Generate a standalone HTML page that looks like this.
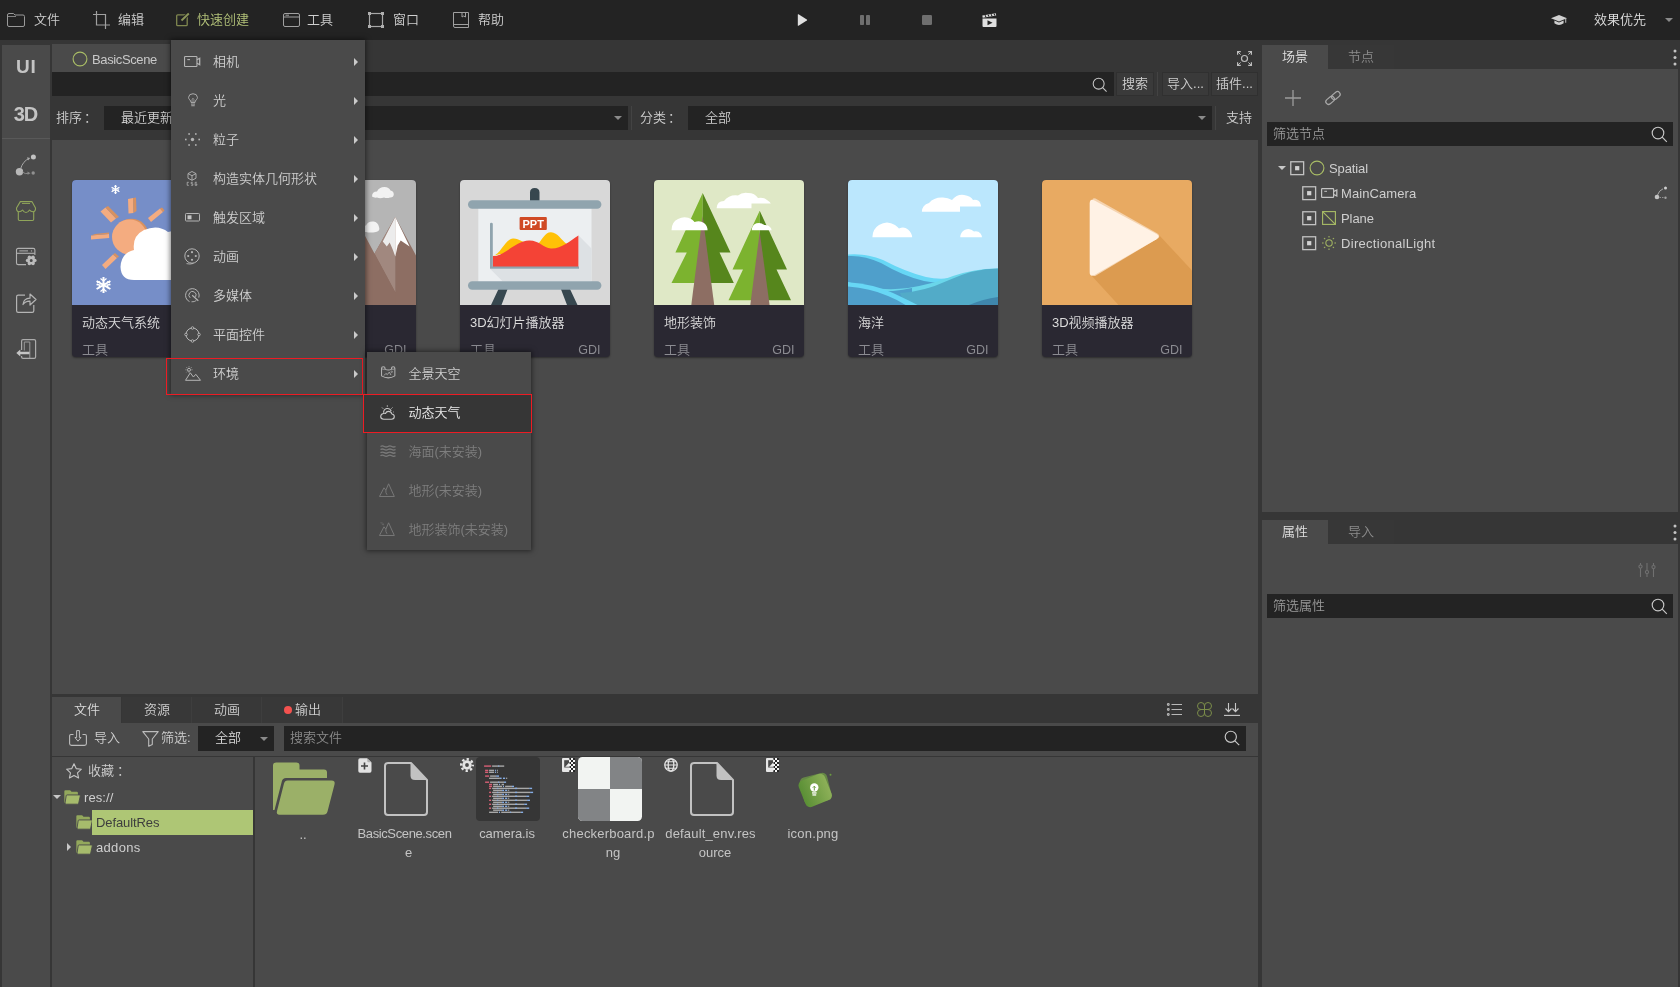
<!DOCTYPE html>
<html lang="zh-CN">
<head>
<meta charset="utf-8">
<title>BasicScene</title>
<style>
*{box-sizing:border-box;margin:0;padding:0}
html,body{width:1680px;height:987px;overflow:hidden;background:#363636}
body{position:relative;will-change:transform;font-family:"Liberation Sans","Noto Sans CJK SC",sans-serif;font-size:13px;color:#cfcfcf;line-height:1;font-weight:350}
.a{position:absolute}
.t{position:absolute;white-space:nowrap;line-height:20px;height:20px}
svg{position:absolute;overflow:visible}
.p{background:#4a4a4a}
.d{background:#232323}
.dim{color:#8d8d8d}
.g{color:#b3c279}
.fl{text-align:center;color:#c4c4c4}
/* menu */
.menu{position:absolute;background:#4a4a4a;box-shadow:0 0 5px 1px rgba(0,0,0,.5)}
.mi{position:absolute;left:0;right:0;height:39px}
.mi .t{left:42px;top:10px}
.mi .ar{position:absolute;right:7.300px;top:16px;width:0;height:0;border-left:4.500px solid #cacaca;border-top:4px solid transparent;border-bottom:4px solid transparent}
.btn{background:#3a3a3a;box-shadow:inset 0 0 0 1px #303030}
/* cards */
.card{position:absolute;top:180px;width:150px;height:177px;border-radius:4px;overflow:hidden;background:#2a2832;box-shadow:0 1px 2px rgba(0,0,0,.4)}
.card .im{position:absolute;left:0;top:0;width:150px;height:125px;overflow:hidden}
.card .nm{position:absolute;left:10px;top:133px;color:#dcdcdc;line-height:20px;white-space:nowrap}
.card .ty{position:absolute;left:10px;top:160px;color:#8c8c92;line-height:20px}
.card .gd{position:absolute;right:9.500px;top:160px;color:#8c8c92;line-height:20px;font-size:12.500px}
</style>
</head>
<body>
<!-- TOPBAR -->
<div class="a d" id="topbar" style="left:0;top:0;width:1680px;height:40px">
 <svg style="left:7px;top:13px" width="18" height="14" viewBox="0 0 18 14" fill="none" stroke="#9a9a9a" stroke-width="1"><path d="M.5 2 Q.5 .5 2 .5 H6.5 L8 2 H16 Q17.5 2 17.5 3.5 V12 Q17.5 13.5 16 13.5 H2 Q.5 13.5 .5 12 Z"/><path d="M.5 3.5H9" stroke-width=".8"/></svg>
 <span class="t" style="left:34px;top:10px">文件</span>
 <svg style="left:93px;top:11px" width="17" height="18" viewBox="0 0 17 18" fill="none" stroke="#a0a0a0" stroke-width="1.2"><path d="M0 3.5H12.5V18"/><path d="M3.5 0V14H17"/></svg>
 <span class="t" style="left:118px;top:10px">编辑</span>
 <svg style="left:176px;top:12px" width="16" height="16" viewBox="0 0 16 16" fill="none" stroke="#808850" stroke-width="1.300"><rect x=".7" y="2.800" width="10.500" height="10.900" rx="1"/><path d="M5.500 8.500L12.800 1.500" stroke-width="3.600" stroke="#232323"/><path d="M5.500 8.500L12.800 1.500" stroke-width="1.900" stroke="#8c965a"/></svg>
 <span class="t g" style="left:197px;top:10px">快速创建</span>
 <svg style="left:283px;top:13px" width="17" height="14" viewBox="0 0 17 14" fill="none" stroke="#a0a0a0" stroke-width="1"><rect x=".5" y=".5" width="16" height="13" rx="1.5"/><path d="M.5 4H16.5M2.5 2.2H6"/></svg>
 <span class="t" style="left:307px;top:10px">工具</span>
 <svg style="left:368px;top:12px" width="16" height="16" viewBox="0 0 16 16" fill="none" stroke="#a8a8a8" stroke-width="1.2"><rect x="1.5" y="1.5" width="13" height="13"/><g fill="#b0b0b0" stroke="none"><rect x="0" y="0" width="3" height="3"/><rect x="13" y="0" width="3" height="3"/><rect x="0" y="13" width="3" height="3"/><rect x="13" y="13" width="3" height="3"/></g></svg>
 <span class="t" style="left:393px;top:10px">窗口</span>
 <svg style="left:453px;top:12px" width="16" height="16" viewBox="0 0 16 16" fill="none" stroke="#a0a0a0" stroke-width="1"><path d="M.5 .5H15.5V15.5H2Q.5 15.5 .5 14Z"/><path d="M.5 12.5H15.5"/><path d="M9 .5V5L10.7 4 12.5 5V.5"/></svg>
 <span class="t" style="left:478px;top:10px">帮助</span>
 <svg style="left:797px;top:14px" width="11" height="12" viewBox="0 0 11 12"><path d="M.8 .6Q.8 0 1.5 .3L9.8 5.4Q10.6 6 9.8 6.6L1.5 11.7Q.8 12 .8 11.4Z" fill="#e0e0e0"/></svg>
 <svg style="left:860px;top:15px" width="10" height="10" viewBox="0 0 10 10" fill="#6e6e6e"><rect x="0" y="0" width="4" height="10" rx=".8"/><rect x="6" y="0" width="4" height="10" rx=".8"/></svg>
 <svg style="left:922px;top:15px" width="10" height="10" viewBox="0 0 10 10" fill="#6e6e6e"><rect x="0" y="0" width="10" height="10" rx="1.2"/></svg>
 <svg style="left:982px;top:13px" width="15" height="14" viewBox="0 0 15 14"><path d="M.5 5.5H14.5V13Q14.5 14 13.5 14H1.5Q.5 14 .5 13Z" fill="#e0e0e0"/><path d="M.3 2.6L13.8 .3L14.2 2.4L.7 4.8Z" fill="#e0e0e0"/><path d="M3 2.2L4 4M6 1.7L7 3.5M9 1.2L10 3M12 .7L13 2.5" stroke="#232323" stroke-width="1.1"/><path d="M5.5 7.3L10.5 9.8L5.5 12.3Z" fill="#232323"/></svg>
 <svg style="left:1551px;top:15px" width="16" height="11" viewBox="0 0 16 11" fill="#d0d0d0"><path d="M8 0L16 3.2L8 6.4L0 3.2Z"/><path d="M3.4 5.6V8.2Q8 11.6 12.600 8.200V5.600L8 7.500Z"/><path d="M14.300 3.800H15.200V7.800H14.300Z"/></svg>
 <span class="t" style="left:1594px;top:10px;color:#e0e0e0">效果优先</span>
 <div class="a" style="left:1665px;top:18px;border-top:4px solid #8a8a8a;border-left:4.500px solid transparent;border-right:4.500px solid transparent"></div>
</div>

<!-- LEFT SIDEBAR -->
<div class="a p" id="sidebar" style="left:2px;top:45px;width:48px;height:942px">
 <span class="t" style="left:0;width:48px;text-align:center;top:10px;font-weight:bold;font-size:19px;letter-spacing:.8px;text-indent:.8px;line-height:24px;height:24px;color:#c4c4c4">UI</span>
 <span class="t" style="left:0;width:48px;text-align:center;top:56.500px;font-weight:bold;font-size:20px;letter-spacing:-1px;text-indent:-1px;line-height:24px;height:24px;color:#c4c4c4">3D</span>
 <div class="a" style="left:0;top:93px;width:48px;height:1px;background:#595959"></div>
 <svg style="left:12px;top:108px" width="24" height="26" viewBox="0 0 24 26"><circle cx="5.5" cy="18.700" r="3.700" fill="#b8b8b8"/><circle cx="19.400" cy="4" r="2.500" fill="#c2c2c2"/><circle cx="19.200" cy="20" r="1.700" fill="#909090"/><path d="M6.500 16Q9 8 15 5.500" fill="none" stroke="#a8a8a8" stroke-width="1"/><path d="M13 4.200L16.300 5L14 7.500Z" fill="#a8a8a8"/><path d="M8.500 19Q11 21.500 14.500 20.300" fill="none" stroke="#8a8a8a" stroke-width="1"/><path d="M13.500 18.600L16.500 20.200L13.600 21.800Z" fill="#8a8a8a"/></svg>
 <svg style="left:14px;top:156px" width="20" height="20" viewBox="0 0 20 20" fill="none" stroke="#90a55a" stroke-width="1.100" stroke-linejoin="round"><path d="M4.300 .6H15.900L19.500 7Q19.800 10.400 17 10.800Q14.800 10.600 13.500 9Q12 11.500 10 11.500Q8 11.500 6.600 9Q5.200 10.600 3 10.800Q.3 10.400 .5 7Z"/><path d="M2.300 10.800V18.300Q2.300 19.500 3.500 19.500H16.500Q17.700 19.500 17.700 18.300V10.800"/><path d="M6 2.500H14" stroke-width=".9"/></svg>
 <svg style="left:14px;top:203px" width="22" height="18" viewBox="0 0 22 18" fill="none" stroke="#b0b0b0" stroke-width="1.100"><path d="M10 16.600H2.200Q.5 16.600 .5 14.900V2Q.5 .4 2.200 .4H17.200Q18.900 .4 18.900 2V7"/><path d="M.5 5.300H18.900"/><path d="M3.300 2.900H12" stroke-width="1"/><circle cx="15.500" cy="2.900" r=".7" fill="#b0b0b0" stroke="none"/><g fill="#bcbcbc" stroke="none"><circle cx="18.90" cy="12.40" r="1.700"/><circle cx="17.05" cy="15.60" r="1.700"/><circle cx="13.35" cy="15.60" r="1.700"/><circle cx="11.50" cy="12.40" r="1.700"/><circle cx="13.35" cy="9.20" r="1.700"/><circle cx="17.05" cy="9.20" r="1.700"/></g><circle cx="15.200" cy="12.400" r="2.700" stroke="#bcbcbc" stroke-width="2.400"/></svg>
 <svg style="left:14px;top:248px" width="21" height="20" viewBox="0 0 21 20" fill="none" stroke="#b4b4b4" stroke-width="1.200" stroke-linejoin="round"><path d="M9 2.200H2.200Q.6 2.200 .6 3.800V17.800Q.6 19.400 2.200 19.400H16.200Q17.800 19.400 17.800 17.800V12"/><path d="M7 11.500Q7.500 5.500 14 5.200V1L20 6.500L14 12V8.200Q9.500 8 7 11.500Z"/></svg>
 <svg style="left:14px;top:294px" width="21" height="20" viewBox="0 0 21 20" fill="none" stroke="#ababab" stroke-width="1.200" stroke-linejoin="round"><path d="M5.600 11V2Q5.600 .6 7 .6H18.200Q19.600 .6 19.600 2V18Q19.600 19.400 18.200 19.400H7Q5.600 19.400 5.600 18V17"/><path d="M8.300 11.500V3H13.800V19" stroke-width="1" stroke="#9a9a9a"/><path d="M.3 14L4.300 10.600V12.700H13.500V15.300H4.300V17.400Z" fill="#c4c4c4" stroke="none"/></svg>
</div>

<!-- MAIN -->
<div class="a p" id="tab1" style="left:52px;top:44px;width:118px;height:29px">
 <svg style="left:20px;top:7px" width="16" height="16" viewBox="0 0 16 16"><circle cx="8" cy="8" r="6.900" fill="none" stroke="#a9bd66" stroke-width="1.100"/></svg>
 <span class="t" id="tTab" style="left:40px;top:6px;font-size:13px;color:#c8c8c8;letter-spacing:-0.38px">BasicScene</span>
</div>
<svg style="left:1236.500px;top:50.700px" width="15" height="15" viewBox="0 0 15 15" fill="none" stroke="#bdbdbd" stroke-width="1.200"><circle cx="7.500" cy="7.500" r="3"/><path d="M.6 3.800V.6H3.800M11.200 .6H14.400V3.800M14.400 11.200V14.400H11.200M3.800 14.400H.6V11.200"/><path d="M.6 .6L3.600 3.600M14.400 .6L11.400 3.600M14.400 14.400L11.400 11.400M.6 14.400L3.600 11.400" stroke-width="1"/></svg>
<div class="a d" id="search" style="left:52px;top:72px;width:1062px;height:24px">
 <svg style="left:1040px;top:4.500px" width="15.500" height="15.500" viewBox="0 0 17 17" fill="none" stroke="#c8c8c8" stroke-width="1.150"><circle cx="7.300" cy="7.300" r="6"/><path d="M11.700 11.700L16 16"/></svg>
</div>
<div class="a btn" style="left:1116px;top:72px;width:38px;height:24px"><span class="t" style="left:0;width:100%;text-align:center;top:2px">搜索</span></div>
<div class="a" style="left:1157px;top:72px;width:1px;height:24px;background:#434343"></div>
<div class="a btn" style="left:1162px;top:72px;width:47px;height:24px"><span class="t" style="left:0;width:100%;text-align:center;top:2px">导入...</span></div>
<div class="a btn" style="left:1211px;top:72px;width:47px;height:24px"><span class="t" style="left:0;width:100%;text-align:center;top:2px">插件...</span></div>
<span class="t" style="left:56px;top:108px">排序<span style="padding-left:2px">：</span></span>
<div class="a d" id="sort" style="left:104px;top:106px;width:524px;height:24px">
 <span class="t" style="left:17px;top:2px">最近更新</span>
 <div class="a" style="left:510px;top:10px;border-top:4px solid #8a8a8a;border-left:4.500px solid transparent;border-right:4.500px solid transparent"></div>
</div>
<div class="a" style="left:631px;top:106px;width:1px;height:24px;background:#434343"></div>
<span class="t" style="left:640px;top:108px">分类<span style="padding-left:2px">：</span></span>
<div class="a d" id="cat" style="left:688px;top:106px;width:524px;height:24px">
 <span class="t" style="left:17px;top:2px">全部</span>
 <div class="a" style="left:510px;top:10px;border-top:4px solid #8a8a8a;border-left:4.500px solid transparent;border-right:4.500px solid transparent"></div>
</div>
<div class="a" style="left:1215px;top:106px;width:1px;height:24px;background:#434343"></div>
<span class="t" style="left:1226px;top:108px">支持</span>
<div class="a p" id="store" style="left:52px;top:140px;width:1206px;height:554px"></div>
<!--CARDS-->
<div class="card" style="left:72px">
 <svg class="im" width="150" height="125" viewBox="0 0 150 125"><rect width="150" height="125" fill="#768ec8"/>
  <g fill="#f4ac80"><path d="M56 19L61 18L61.500 33L56.500 33.500Z"/><path d="M28.500 31.500L33.500 27.500L44 38.500L39 42.500Z"/><path d="M19 55.500L37 54L37.200 58L19 59.500Z"/><path d="M30 85L41 74.500L45 78L33.500 89Z"/><path d="M76 38L88 28.500L91 32L79 42Z"/></g>
  <g fill="#d8915f"><path d="M61 18L64 17.500L64.500 31L61.500 33Z"/><path d="M33.500 27.500L36 26L47 37L44 38.500Z"/><path d="M23 54L37 52.500L37 54L19 55.500Z"/><path d="M41 74.500L43 73L47 76.500L45 78Z"/><path d="M88 28.500L90 27.500L92.500 30.500L91 32Z"/></g>
  <circle cx="59.300" cy="56.300" r="17.600" fill="#d8915f"/><circle cx="57.500" cy="57" r="17.500" fill="#f4ac80"/>
  <path d="M62 70Q60 56 72 50Q86 44 96 52Q112 48 120 62Q134 64 134 82Q134 100 116 100H62Q49 100 48.500 87Q49 73 62 70Z" fill="#fff"/>
  <g stroke="#fff" stroke-width="1.300" fill="none"><path d="M43.500 5V14M39.600 7.200L47.400 11.800M39.600 11.800L47.400 7.200"/><path d="M42 6L43.500 7L45 6M42 13L43.500 12L45 13M39.800 9L41.300 9.500 40.300 10.800M47.200 9L45.700 9.500 46.700 10.800" stroke-width=".8"/></g>
  <g stroke="#fff" stroke-width="2" fill="none"><path d="M31.500 97V113M24.600 101L38.400 109M24.600 109L38.400 101"/><path d="M28.500 98.500L31.500 101L34.500 98.500M28.500 111.500L31.500 109L34.500 111.500M24.500 104.500L28 105 26.500 108.500M38.500 104.500L35 105 36.500 108.500M25 103L28 101.500M38 103L35 101.500" stroke-width="1.300"/></g>
 </svg>
 <span class="nm">动态天气系统</span><span class="ty">工具</span><span class="gd">GDI</span>
</div>
<div class="card" style="left:266px">
 <svg class="im" width="150" height="125" viewBox="0 0 150 125"><rect width="150" height="125" fill="#b5b5b5"/>
  <path d="M129.300 37.100L150 75.500V125H60L108.500 73.500Z" fill="#8d6e63"/>
  <path d="M129.300 37.100L108.500 73.500L129.300 112.200Z" fill="#a1887f"/>
  <path d="M40 125L80 20.500L99.900 57.600L129.300 112.200V125Z" fill="#8d6e63"/>
  <path d="M129.300 37.100L116.800 61.600L120.800 66.500L123.700 62.600L126.700 69.500L129.300 76.500Z" fill="#ececec"/>
  <path d="M129.300 37.100L143.600 66.500L134.700 60.600L131.700 65.500L129.300 76.500Z" fill="#fff"/>
  <g fill="#f2f2f2"><path d="M106 16.500Q106 11.500 111 11.500Q113 7 118.500 7Q123 7 124.500 10.500Q127.800 11 127.800 14.500Q127.500 17.700 124 17.500Q121 18.500 118 17.500Q114 19 111 17.500Q108 18 106 16.500Z"/><path d="M95 50Q95 45.500 100 45.500Q102 41 107.500 41.500Q112 42 113 47Q114.500 51 110 52Q104 53 100 52Q96 52.500 95 50Z"/></g>
 </svg>
 <span class="ty">工具</span><span class="gd">GDI</span>
</div>
<div class="card" style="left:460px">
 <svg class="im" width="150" height="125" viewBox="0 0 150 125"><rect width="150" height="125" fill="#d8d8d8"/>
  <path d="M70 12.500Q70 8 74.700 8Q79.500 8 79.500 12.500V22H70Z" fill="#37474f"/>
  <path d="M39 108H48L41.500 125H31Z M100.500 108H109.500L117.500 125H107Z" fill="#37474f"/>
  <rect x="18.300" y="28" width="113.200" height="74" fill="#eceff1"/>
  <path d="M118.600 55.500L131.500 68.400V101.300H42.500L30 88.800H118.600Z" fill="#dde1e4"/>
  <rect x="8" y="20.300" width="133.400" height="8.500" rx="4.250" fill="#90a4ae"/>
  <rect x="8" y="101.300" width="133.400" height="8.500" rx="4.250" fill="#90a4ae"/>
  <path d="M32.800 76C41 74 45 59 53 58.600C60 58.300 63 64 69 63L78 64C82 60 85 52 91 52.200C98 52.500 101 60 107 64L100 74H40Z" fill="#ffc107"/>
  <path d="M32.800 76C44 77 55 61 69 60.600C79 60.300 83 68 91 68.500C101 69 110 61 118.400 55.500V87H32.800Z" fill="#f44336"/>
  <path d="M30 44Q30 42.700 31.400 42.700Q32.800 42.700 32.800 44V86.400H119V88.800H30Z" fill="#90a4ae"/>
  <rect x="59.600" y="37" width="27.200" height="13" rx="1" fill="#d04a25"/>
  <text x="73.200" y="47.700" font-size="11" font-weight="bold" fill="#fff" text-anchor="middle" font-family="Liberation Sans,sans-serif">PPT</text>
 </svg>
 <span class="nm">3D幻灯片播放器</span><span class="ty">工具</span><span class="gd">GDI</span>
</div>
<div class="card" style="left:654px">
 <svg class="im" width="150" height="125" viewBox="0 0 150 125"><rect width="150" height="125" fill="#dfe8c6"/>
  <path d="M48.700 12.900L21.400 72.500H32.800L17.500 102.900H48.700Z" fill="#7cb32f"/>
  <path d="M48.700 12.900L76.500 72.500H65.500L79.800 102.900H48.700Z" fill="#56861c"/>
  <path d="M48.700 36L60.200 125H37.300Z" fill="#8d6e63"/>
  <path d="M105.700 30.800L78.500 89.400H89L74.500 120.200H105.700Z" fill="#7cb32f"/>
  <path d="M105.700 30.800L133 89.400H122.500L137 120.200H105.700Z" fill="#56861c"/>
  <path d="M105.700 52L115.600 125H96.300Z" fill="#8d6e63"/>
  <g fill="#fff"><path d="M62.600 28.200Q63 21 70 21Q75 14.500 84 15.500Q88 12 94 12.900Q101 13 104 18Q110 17 113 20Q116.500 22 116.800 23.500H97.500V28.200Z"/>
  <path d="M17.500 50.200Q17.500 42 24 39Q31 35.500 38 39.500Q40 41 40.500 42Q46 40 50 43Q53.600 46 53.600 50.200Z"/>
  <path d="M97.700 50.200Q98 45 102.500 43.300Q107 42 110 45Q114 44.500 116 47Q117.600 48.500 117.600 50.200Z"/></g>
 </svg>
 <span class="nm">地形装饰</span><span class="ty">工具</span><span class="gd">GDI</span>
</div>
<div class="card" style="left:848px">
 <svg class="im" width="150" height="125" viewBox="0 0 150 125"><rect width="150" height="125" fill="#bbe7fd"/>
  <g fill="#fff"><path d="M73.900 31.800Q74 25 81 23Q86 17 95 17.500Q100 17.500 104 20Q109 14 116 15Q123 16 125 20Q131 19 132.500 24Q133 25.500 133 26.500H112V31.800Z"/>
  <path d="M24.400 57.200Q24.500 49 31 45Q39 40 47 45Q50 47 51 48.500Q56 46 60 49.500Q64 53 64.200 57.200Z"/>
  <path d="M112.200 57.200Q112.500 52 117 49.800Q122 47.500 126 51.500Q130 50.500 132.500 53.500Q134 55.500 134 57.200Z"/></g>
  <path d="M0 74.500Q18 73 35 80Q58 92 78 97Q95 101 112 96V125H0Z" fill="#67d7f5"/>
  <path d="M0 76Q16 75 33 83Q55 96 76 101Q90 104 100 102V125H0Z" fill="#4f9fcb"/>
  <path d="M0 102Q30 112 60 108Q85 104 105 96Q128 88 150 88.400V125H0Z" fill="#6ad6ea"/>
  <path d="M0 106Q22 112 45 111Q55 110 64 108V125H0Z" fill="#4f9fcb"/>
  <path d="M52 113Q75 112 100 100.500Q125 88.500 150 88.400V125H57Z" fill="#52abc8"/>
  <path d="M0 102.300Q25 104 45 113Q60 120 69.500 125H0Z" fill="#67d7f5"/>
  <path d="M0 106.500Q22 108 40 116Q50 120 57.600 125H0Z" fill="#4f9fcb"/>
  <path d="M121 125Q135 119 150 117V125Z" fill="#3f86ac"/>
 </svg>
 <span class="nm">海洋</span><span class="ty">工具</span><span class="gd">GDI</span>
</div>
<div class="card" style="left:1042px">
 <svg class="im" width="150" height="125" viewBox="0 0 150 125"><rect width="150" height="125" fill="#e8aa62"/>
  <path d="M53 20L116 54L150 90.400V125H76.500L49 95Z" fill="#dc9b50"/>
  <path d="M50.500 19.800Q50.500 17.500 53.500 18.500L115.500 53.500Q118.500 55.500 116.500 58L54 95.500Q51 97 50 94Z" fill="#f5d4b0"/>
  <path d="M47.700 23.500Q47.700 18 52.500 20.500L114.500 54Q118.500 56.600 114.500 59.200L52.500 95Q47.700 97.500 47.700 92Z" fill="#fff2e5"/>
 </svg>
 <span class="nm">3D视频播放器</span><span class="ty">工具</span><span class="gd">GDI</span>
</div>
<!--/CARDS-->

<!-- BOTTOM -->
<div class="a" style="left:122px;top:697px;width:221px;height:26px;background:#383838"></div>
<div class="a" style="left:191px;top:697px;width:1px;height:26px;background:#3e3e3e"></div>
<div class="a" style="left:261px;top:697px;width:1px;height:26px;background:#3e3e3e"></div>
<div class="a" style="left:342px;top:697px;width:1px;height:26px;background:#3e3e3e"></div>
<div class="a p" id="btab" style="left:52px;top:697px;width:69px;height:27px"></div>
<span class="t" style="left:74px;top:700px;color:#dcdcdc">文件</span>
<span class="t" style="left:144px;top:700px">资源</span>
<span class="t" style="left:214px;top:700px">动画</span>
<div class="a" style="left:284px;top:706px;width:8px;height:8px;border-radius:4px;background:#f4524f"></div>
<span class="t" style="left:295px;top:700px">输出</span>
<svg style="left:1167px;top:703px" width="15" height="13" viewBox="0 0 15 13" fill="none" stroke="#b8b8b8" stroke-width="1.100"><path d="M4.500 1.500H15M4.500 6.500H15M4.500 11.500H15"/><circle cx="1.300" cy="1.500" r=".9"/><circle cx="1.300" cy="6.500" r=".9"/><circle cx="1.300" cy="11.500" r=".9"/></svg>
<svg style="left:1196.500px;top:701.500px" width="15" height="15" viewBox="0 0 15 15" fill="none" stroke="#7b8d4a" stroke-width="1" stroke-linejoin="round"><path d="M7.500 7.500H4A3.500 3.500 0 1 1 7.500 4Z"/><path d="M7.500 7.500V4A3.500 3.500 0 1 1 11 7.500Z"/><path d="M7.500 7.500H11A3.500 3.500 0 1 1 7.500 11Z"/><path d="M7.500 7.500V11A3.500 3.500 0 1 1 4 7.500Z"/></svg>
<svg style="left:1224px;top:703px" width="16" height="13" viewBox="0 0 16 13" fill="none" stroke="#c8c8c8" stroke-width="1.100"><path d="M0 12.400H16"/><path d="M4.500 0V8.500M1.500 5.500L4.500 8.700L7.500 5.500M11.500 0V8.500M8.500 5.500L11.500 8.700L14.500 5.500"/></svg>
<div class="a p" id="btool" style="left:52px;top:723px;width:1206px;height:33px"></div>
<svg style="left:69px;top:730px" width="18" height="16" viewBox="0 0 18 16" fill="none" stroke="#bcbcbc" stroke-width="1.100"><path d="M4.500 4.500H2Q.6 4.500 .6 6V13.500Q.6 15.400 2.500 15.400H15.500Q17.400 15.400 17.400 13.500V6Q17.400 4.500 16 4.500H13.500"/><path d="M7.600 .6H10.400V7.500H12L9 11.200L6 7.500H7.600Z" stroke-width="1" stroke-linejoin="round"/></svg>
<span class="t" style="left:94px;top:728px">导入</span>
<svg style="left:142px;top:731px" width="17" height="16" viewBox="0 0 17 16" fill="none" stroke="#bcbcbc" stroke-width="1.100" stroke-linejoin="round"><path d="M.8 .6H16.200L10.300 8V13.500L6.700 15.200V8Z"/></svg>
<span class="t" style="left:161px;top:728px">筛选:</span>
<div class="a d" style="left:198px;top:726px;width:76px;height:25px">
 <span class="t" style="left:17px;top:2px;color:#dcdcdc">全部</span>
 <div class="a" style="left:62px;top:11px;border-top:4px solid #8a8a8a;border-left:4px solid transparent;border-right:4px solid transparent"></div>
</div>
<div class="a d" style="left:284px;top:726px;width:962px;height:25px">
 <span class="t" style="left:6px;top:2px;color:#8a8a8a">搜索文件</span>
 <svg style="left:940px;top:4px" width="16" height="16" viewBox="0 0 16 16" fill="none" stroke="#c8c8c8" stroke-width="1.150"><circle cx="6.800" cy="6.800" r="5.600"/><path d="M10.900 10.900L15.200 15.200"/></svg>
</div>
<div class="a p" id="tree" style="left:52px;top:757px;width:201px;height:230px"></div>
<div class="a p" id="files" style="left:255px;top:757px;width:1003px;height:230px"></div>
<!--TREE-->
<svg style="left:66px;top:763px" width="16" height="16" viewBox="0 0 16 16" fill="none" stroke="#c4c4c4" stroke-width="1.100" stroke-linejoin="round"><path d="M8 .8L10.200 5.600L15.400 6.200L11.500 9.800L12.600 15L8 12.400L3.400 15L4.500 9.800L.6 6.200L5.800 5.600Z"/></svg>
<span class="t" style="left:88px;top:761px">收藏<span style="padding-left:3px">：</span></span>
<div class="a" style="left:53px;top:795px;border-top:4px solid #c8c8c8;border-left:4px solid transparent;border-right:4px solid transparent"></div>
<svg style="left:64px;top:790px" width="16.500" height="14.400" viewBox="0 0 16 14"><path d="M.3 1.200Q.3 .2 1.300 .2H5.500Q6.300 .2 6.700 1L7.200 1.800H12.500Q13.500 1.800 13.500 2.800V12.500H.3Z" fill="#93a85c"/><path d="M3 4.800H15Q16 4.800 15.800 5.800L14.300 12.800Q14.100 13.800 13.100 13.800H2Q.8 13.800 1 12.600L2.100 5.600Q2.200 4.800 3 4.800Z" fill="#a6bb6c" stroke="#4b4b4b" stroke-width=".9"/></svg>
<span class="t" id="tres" style="left:84px;top:788px;letter-spacing:0.08px">res://</span>
<svg style="left:76px;top:815px" width="16.500" height="14.400" viewBox="0 0 16 14"><path d="M.3 1.200Q.3 .2 1.300 .2H5.500Q6.300 .2 6.700 1L7.200 1.800H12.500Q13.500 1.800 13.500 2.800V12.500H.3Z" fill="#93a85c"/><path d="M3 4.800H15Q16 4.800 15.800 5.800L14.300 12.800Q14.100 13.800 13.100 13.800H2Q.8 13.800 1 12.600L2.100 5.600Q2.200 4.800 3 4.800Z" fill="#a6bb6c" stroke="#4b4b4b" stroke-width=".9"/></svg>
<div class="a" style="left:92px;top:810px;width:161px;height:25px;background:#aec675"></div>
<span class="t" id="tDefaultRes" style="left:96px;top:813px;color:#3e3e3e;letter-spacing:-0.10px">DefaultRes</span>
<div class="a" style="left:67px;top:843px;border-left:4.500px solid #c8c8c8;border-top:4px solid transparent;border-bottom:4px solid transparent"></div>
<svg style="left:76px;top:840px" width="16.500" height="14.400" viewBox="0 0 16 14"><path d="M.3 1.200Q.3 .2 1.300 .2H5.500Q6.300 .2 6.700 1L7.200 1.800H12.500Q13.500 1.800 13.500 2.800V12.500H.3Z" fill="#93a85c"/><path d="M3 4.800H15Q16 4.800 15.800 5.800L14.300 12.800Q14.100 13.800 13.100 13.800H2Q.8 13.800 1 12.600L2.100 5.600Q2.200 4.800 3 4.800Z" fill="#a6bb6c" stroke="#4b4b4b" stroke-width=".9"/></svg>
<span class="t" id="taddons" style="left:96px;top:838px;letter-spacing:0.32px">addons</span>
<!--/TREE-->
<!--FILES-->
<svg style="left:273px;top:762px" width="62" height="53" viewBox="0 0 62 53"><path d="M0 3.500Q0 .5 3 .5H23.500Q26.500 .5 26.500 3.500V7.500H51Q54 7.500 54 10.500V16H13Q9.500 16 8.800 19.500L1.500 48H0Z" fill="#9bb068"/><path d="M14.500 18.500H58.500Q62.500 18.500 61.500 22.500L54.500 49.500Q53.600 52.800 50 52.800H6.500Q3 52.800 4 49L11 21.500Q11.800 18.500 14.500 18.500Z" fill="#9bb068"/></svg>
<span class="t fl" style="left:243px;width:120px;top:825px">..</span>
<svg style="left:358px;top:757.500px" width="14" height="15" viewBox="0 0 14 15"><path d="M2 .3H9L13.500 4.500V13Q13.500 14.700 11.800 14.700H2Q.3 14.700 .3 13V2Q.3 .3 2 .3Z" fill="#e2e2e2"/><path d="M9.300 .3L13.500 4.300H10.500Q9.300 4.300 9.300 3.200Z" fill="#b0b0b0"/><path d="M6.500 4.500V11.500M3 8H10" stroke="#444" stroke-width="1.600"/></svg>
<svg style="left:384px;top:762px" width="44" height="54" viewBox="0 0 44 54"><path d="M4 1H27L43 18V50Q43 53 40 53H4Q1 53 1 50V4Q1 1 4 1Z" fill="none" stroke="#c2c2c2" stroke-width="2" stroke-linejoin="round"/><path d="M26.500 1L43 18H31Q26.500 18 26.500 13.500Z" fill="#c2c2c2"/></svg>
<span class="t fl" id="fBasic" style="left:344.5px;width:120px;top:824px;letter-spacing:-0.38px">BasicScene.scen</span>
<span class="t fl" style="left:348.5px;width:120px;top:843px">e</span>
<svg style="left:460px;top:758px" width="14" height="14" viewBox="0 0 14 14"><circle cx="7" cy="7" r="3.300" fill="none" stroke="#e4e4e4" stroke-width="2.800"/><circle cx="7" cy="7" r="5.800" fill="none" stroke="#e4e4e4" stroke-width="2.400" stroke-dasharray="2.300 2.255" stroke-dashoffset="1.100"/></svg>
<div class="a" style="left:476px;top:757px;width:64px;height:64px;border-radius:4px;background:#363636"></div>
<svg style="left:476px;top:757px" width="64" height="64" viewBox="0 0 64 64" opacity=".92"><rect x="8.1" y="8.4" width="7.1" height="1.400" fill="#e4637a"/><rect x="16.1" y="8.4" width="12.1" height="1.400" fill="#b2b2b2"/><rect x="22.2" y="8.4" width="1.0" height="1.400" fill="#8db6f2"/><rect x="9.1" y="12.7" width="3.1" height="1.400" fill="#e4637a"/><rect x="13.1" y="12.7" width="5.0" height="1.400" fill="#b2b2b2"/><rect x="19.1" y="12.7" width="1.0" height="1.400" fill="#8db6f2"/><rect x="21.2" y="12.7" width="0.8" height="1.400" fill="#b2b2b2"/><rect x="9.1" y="14.6" width="3.1" height="1.400" fill="#e4637a"/><rect x="13.1" y="14.6" width="5.0" height="1.400" fill="#b2b2b2"/><rect x="19.1" y="14.6" width="1.0" height="1.400" fill="#8db6f2"/><rect x="21.2" y="14.6" width="0.8" height="1.400" fill="#b2b2b2"/><rect x="9.1" y="18.4" width="4.0" height="1.400" fill="#e4637a"/><rect x="14.1" y="18.4" width="6.0" height="1.400" fill="#b2b2b2"/><rect x="20.1" y="18.4" width="2.9" height="1.400" fill="#8db6f2"/><rect x="13.1" y="20.6" width="10.8" height="1.400" fill="#b2b2b2"/><rect x="23.9" y="20.6" width="1.7" height="1.400" fill="#8db6f2"/><rect x="27.0" y="20.6" width="2.1" height="1.400" fill="#8db6f2"/><rect x="30.1" y="20.6" width="1.1" height="1.400" fill="#b2b2b2"/><rect x="9.1" y="24.5" width="4.0" height="1.400" fill="#e4637a"/><rect x="14.1" y="24.5" width="13.9" height="1.400" fill="#b2b2b2"/><rect x="22.2" y="24.5" width="1.0" height="1.400" fill="#8db6f2"/><rect x="28.0" y="24.5" width="2.1" height="1.400" fill="#8db6f2"/><rect x="13.1" y="26.8" width="3.0" height="1.400" fill="#e4637a"/><rect x="17.1" y="26.8" width="5.0" height="1.400" fill="#b2b2b2"/><rect x="23.0" y="26.8" width="1.1" height="1.400" fill="#8db6f2"/><rect x="25.6" y="26.8" width="2.4" height="1.400" fill="#b2b2b2"/><rect x="13.1" y="28.7" width="3.0" height="1.400" fill="#e4637a"/><rect x="17.1" y="28.7" width="9.0" height="1.400" fill="#b2b2b2"/><rect x="27.0" y="28.7" width="1.0" height="1.400" fill="#8db6f2"/><rect x="29.1" y="28.7" width="6.9" height="1.400" fill="#b2b2b2"/><rect x="36.0" y="28.7" width="2.0" height="1.400" fill="#8db6f2"/><rect x="13.1" y="30.7" width="2.0" height="1.400" fill="#e4637a"/><rect x="16.1" y="30.7" width="37.1" height="1.400" fill="#b2b2b2"/><rect x="21.2" y="30.7" width="1.0" height="1.400" fill="#8db6f2"/><rect x="39.1" y="30.7" width="2.0" height="1.400" fill="#8db6f2"/><rect x="53.2" y="30.7" width="2.9" height="1.400" fill="#8db6f2"/><rect x="17.1" y="32.7" width="9.0" height="1.400" fill="#b2b2b2"/><rect x="26.1" y="32.7" width="1.9" height="1.400" fill="#8db6f2"/><rect x="29.1" y="32.7" width="2.1" height="1.400" fill="#8db6f2"/><rect x="32.2" y="32.7" width="1.0" height="1.400" fill="#b2b2b2"/><rect x="13.1" y="34.7" width="2.0" height="1.400" fill="#e4637a"/><rect x="16.1" y="34.7" width="38.0" height="1.400" fill="#b2b2b2"/><rect x="21.2" y="34.7" width="1.0" height="1.400" fill="#8db6f2"/><rect x="39.1" y="34.7" width="2.0" height="1.400" fill="#8db6f2"/><rect x="54.1" y="34.7" width="3.0" height="1.400" fill="#8db6f2"/><rect x="17.1" y="36.7" width="9.0" height="1.400" fill="#b2b2b2"/><rect x="26.1" y="36.7" width="1.9" height="1.400" fill="#8db6f2"/><rect x="29.1" y="36.7" width="2.1" height="1.400" fill="#8db6f2"/><rect x="32.2" y="36.7" width="1.0" height="1.400" fill="#b2b2b2"/><rect x="13.1" y="38.6" width="2.0" height="1.400" fill="#e4637a"/><rect x="16.1" y="38.6" width="34.0" height="1.400" fill="#b2b2b2"/><rect x="21.2" y="38.6" width="1.0" height="1.400" fill="#8db6f2"/><rect x="39.1" y="38.6" width="2.0" height="1.400" fill="#8db6f2"/><rect x="50.1" y="38.6" width="3.1" height="1.400" fill="#8db6f2"/><rect x="17.1" y="40.6" width="9.0" height="1.400" fill="#b2b2b2"/><rect x="26.1" y="40.6" width="1.9" height="1.400" fill="#8db6f2"/><rect x="29.1" y="40.6" width="2.1" height="1.400" fill="#8db6f2"/><rect x="32.2" y="40.6" width="1.0" height="1.400" fill="#b2b2b2"/><rect x="13.1" y="42.6" width="2.0" height="1.400" fill="#e4637a"/><rect x="16.1" y="42.6" width="35.0" height="1.400" fill="#b2b2b2"/><rect x="21.2" y="42.6" width="1.0" height="1.400" fill="#8db6f2"/><rect x="39.1" y="42.6" width="2.0" height="1.400" fill="#8db6f2"/><rect x="51.1" y="42.6" width="2.9" height="1.400" fill="#8db6f2"/><rect x="17.1" y="44.6" width="9.0" height="1.400" fill="#b2b2b2"/><rect x="26.1" y="44.6" width="1.9" height="1.400" fill="#8db6f2"/><rect x="29.1" y="44.6" width="2.1" height="1.400" fill="#8db6f2"/><rect x="32.2" y="44.6" width="1.0" height="1.400" fill="#b2b2b2"/><rect x="13.1" y="46.6" width="2.0" height="1.400" fill="#e4637a"/><rect x="16.1" y="46.6" width="32.1" height="1.400" fill="#b2b2b2"/><rect x="21.2" y="46.6" width="1.0" height="1.400" fill="#8db6f2"/><rect x="39.1" y="46.6" width="2.0" height="1.400" fill="#8db6f2"/><rect x="48.2" y="46.6" width="2.9" height="1.400" fill="#8db6f2"/><rect x="17.1" y="48.6" width="9.0" height="1.400" fill="#b2b2b2"/><rect x="26.1" y="48.6" width="1.9" height="1.400" fill="#8db6f2"/><rect x="29.1" y="48.6" width="2.1" height="1.400" fill="#8db6f2"/><rect x="32.2" y="48.6" width="1.0" height="1.400" fill="#b2b2b2"/><rect x="13.1" y="50.5" width="2.0" height="1.400" fill="#e4637a"/><rect x="16.1" y="50.5" width="34.0" height="1.400" fill="#b2b2b2"/><rect x="21.2" y="50.5" width="1.0" height="1.400" fill="#8db6f2"/><rect x="39.1" y="50.5" width="2.0" height="1.400" fill="#8db6f2"/><rect x="50.1" y="50.5" width="3.1" height="1.400" fill="#8db6f2"/><rect x="17.1" y="52.5" width="9.0" height="1.400" fill="#b2b2b2"/><rect x="26.1" y="52.5" width="1.9" height="1.400" fill="#8db6f2"/><rect x="29.1" y="52.5" width="2.1" height="1.400" fill="#8db6f2"/><rect x="32.2" y="52.5" width="1.0" height="1.400" fill="#b2b2b2"/><rect x="13.1" y="54.6" width="9.0" height="1.400" fill="#b2b2b2"/><rect x="23.0" y="54.6" width="1.1" height="1.400" fill="#8db6f2"/><rect x="25.2" y="54.6" width="19.7" height="1.400" fill="#b2b2b2"/><rect x="34.1" y="54.6" width="1.0" height="1.400" fill="#8db6f2"/><rect x="44.9" y="54.6" width="2.2" height="1.400" fill="#8db6f2"/></svg>
<span class="t fl" id="fCamera" style="left:447px;width:120px;top:824px;letter-spacing:-0.08px">camera.is</span>
<svg style="left:562px;top:758px" width="14" height="14" viewBox="0 0 14 14"><rect x="7" y="0" width="6" height="14" fill="#262626"/><rect x="0" y="0" width="7.500" height="14" rx="1" fill="#e6e6e6"/><rect x="2.200" y="2.200" width="5" height="7.300" fill="#484848"/><path d="M3.200 8.700L7.200 4.500V8.700Z" fill="#ececec"/><g fill="#f4f4f4"><rect x="9" y="0" width="2" height="2"/><rect x="7" y="2" width="2" height="2"/><rect x="11" y="2" width="2" height="2"/><rect x="9" y="4" width="2" height="2"/><rect x="7" y="6" width="2" height="2"/><rect x="11" y="6" width="2" height="2"/><rect x="9" y="8" width="2" height="2"/><rect x="7" y="10" width="2" height="2"/><rect x="11" y="10" width="2" height="2"/><rect x="9" y="12" width="2" height="2"/></g></svg>
<svg style="left:578px;top:757px" width="64" height="64" viewBox="0 0 64 64"><clipPath id="ck"><rect width="64" height="64" rx="4.500"/></clipPath><g clip-path="url(#ck)"><rect width="64" height="64" fill="#f2f4f2"/><rect x="32" y="0" width="32" height="32" fill="#828486"/><rect x="0" y="32" width="32" height="32" fill="#828486"/></g></svg>
<span class="t fl" id="fChecker" style="left:548.5px;width:120px;top:824px;letter-spacing:0.19px">checkerboard.p</span>
<span class="t fl" style="left:553px;width:120px;top:843px">ng</span>
<svg style="left:664px;top:758px" width="14" height="14" viewBox="0 0 14 14" fill="none" stroke="#e4e4e4" stroke-width="1.300"><circle cx="7" cy="7" r="6.200"/><ellipse cx="7" cy="7" rx="2.800" ry="6.200"/><path d="M.8 7H13.200M1.800 3.800H12.200M1.800 10.200H12.200" stroke-width="1.100"/></svg>
<svg style="left:690px;top:762px" width="44" height="54" viewBox="0 0 44 54"><path d="M4 1H27L43 18V50Q43 53 40 53H4Q1 53 1 50V4Q1 1 4 1Z" fill="none" stroke="#c2c2c2" stroke-width="2" stroke-linejoin="round"/><path d="M26.500 1L43 18H31Q26.500 18 26.500 13.500Z" fill="#c2c2c2"/></svg>
<span class="t fl" id="fDefault" style="left:650.5px;width:120px;top:824px;letter-spacing:0.17px">default_env.res</span>
<span class="t fl" style="left:655px;width:120px;top:843px">ource</span>
<svg style="left:766px;top:758px" width="14" height="14" viewBox="0 0 14 14"><rect x="7" y="0" width="6" height="14" fill="#262626"/><rect x="0" y="0" width="7.500" height="14" rx="1" fill="#e6e6e6"/><rect x="2.200" y="2.200" width="5" height="7.300" fill="#484848"/><path d="M3.200 8.700L7.200 4.500V8.700Z" fill="#ececec"/><g fill="#f4f4f4"><rect x="9" y="0" width="2" height="2"/><rect x="7" y="2" width="2" height="2"/><rect x="11" y="2" width="2" height="2"/><rect x="9" y="4" width="2" height="2"/><rect x="7" y="6" width="2" height="2"/><rect x="11" y="6" width="2" height="2"/><rect x="9" y="8" width="2" height="2"/><rect x="7" y="10" width="2" height="2"/><rect x="11" y="10" width="2" height="2"/><rect x="9" y="12" width="2" height="2"/></g></svg>
<svg style="left:796px;top:772px" width="38" height="36" viewBox="0 0 38 36"><defs><linearGradient id="gi" x1="0" y1="0" x2="1" y2="0"><stop offset="0" stop-color="#5a8f35"/><stop offset="1" stop-color="#8db058"/></linearGradient></defs><g transform="rotate(-22 19 18)"><rect x="6" y="3" width="28" height="28" rx="5" fill="#6f9c44" opacity=".75" transform="rotate(8 19 18)"/><rect x="5" y="4.500" width="28" height="28" rx="5" fill="url(#gi)"/></g><circle cx="34.500" cy="2.800" r="1" fill="#6a9a40"/><circle cx="18.300" cy="15.500" r="4.200" fill="#fff"/><rect x="16" y="20.300" width="4.600" height="1.300" fill="#fff"/><rect x="16.400" y="22.300" width="3.800" height="1.300" fill="#fff"/><path d="M18.300 14.200V18.500M16.800 15.700L18.300 14.200L19.800 15.700" stroke="#6f9c44" stroke-width="1" fill="none"/></svg>
<span class="t fl" id="fIcon" style="left:753px;width:120px;top:824px;letter-spacing:0.26px">icon.png</span>
<!--/FILES-->

<!-- RIGHT -->
<div class="a" style="left:1328px;top:45px;width:66px;height:25px;background:#373737"></div>
<div class="a p" id="rtab" style="left:1262px;top:45px;width:66px;height:25px"></div>
<span class="t" style="left:1282px;top:47px;color:#e2e2e2">场景</span>
<span class="t dim" style="left:1348px;top:47px">节点</span>
<div class="a p" id="scene" style="left:1262px;top:69px;width:416px;height:443px"></div>
<svg style="left:1673px;top:49px" width="4" height="17" viewBox="0 0 4 17" fill="#c4c4c4"><circle cx="2" cy="2" r="1.500"/><circle cx="2" cy="8.500" r="1.500"/><circle cx="2" cy="15" r="1.500"/></svg>
<svg style="left:1285px;top:90px" width="16" height="16" viewBox="0 0 16 16" fill="none" stroke="#9c9c9c" stroke-width="1.300"><path d="M8 0V16M0 8H16"/></svg>
<svg style="left:1324px;top:89px" width="18" height="18" viewBox="0 0 18 18" fill="none" stroke="#a8a8a8" stroke-width="1.200"><g transform="rotate(-40 9 9)"><rect x=".5" y="6.300" width="9.500" height="5.400" rx="2.700"/><rect x="8" y="6.300" width="9.500" height="5.400" rx="2.700"/></g></svg>
<div class="a d" style="left:1267px;top:122px;width:406px;height:24px">
 <span class="t" style="left:6px;top:2px;color:#9a9a9a">筛选节点</span>
 <svg style="left:384px;top:4px" width="17" height="17" viewBox="0 0 17 17" fill="none" stroke="#c8c8c8" stroke-width="1.150"><circle cx="7" cy="7" r="5.800"/><path d="M11.200 11.200L15.800 15.800"/></svg>
</div>
<!--SCENETREE-->
<div class="a" style="left:1278px;top:166px;border-top:4px solid #c8c8c8;border-left:4px solid transparent;border-right:4px solid transparent"></div>
<svg style="left:1289.8px;top:160.8px" width="14.400" height="14.400" viewBox="0 0 15 15"><rect x=".8" y=".8" width="13.400" height="13.400" fill="none" stroke="#c2c2c2" stroke-width="1.350"/><rect x="5.300" y="5.300" width="4.400" height="4.400" fill="#d2d2d2"/></svg>
<svg style="left:1309px;top:160px" width="16" height="16" viewBox="0 0 16 16"><circle cx="8" cy="8" r="6.900" fill="none" stroke="#a9bd66" stroke-width="1.100"/></svg>
<span class="t" id="tSpatial" style="left:1329px;top:159px;letter-spacing:-0.11px">Spatial</span>
<svg style="left:1301.8px;top:185.8px" width="14.400" height="14.400" viewBox="0 0 15 15"><rect x=".8" y=".8" width="13.400" height="13.400" fill="none" stroke="#c2c2c2" stroke-width="1.350"/><rect x="5.300" y="5.300" width="4.400" height="4.400" fill="#d2d2d2"/></svg>
<svg style="left:1321px;top:188px" width="17" height="10" viewBox="0 0 17 10" fill="none" stroke="#c4c4c4" stroke-width="1.200"><rect x=".6" y=".6" width="12" height="8.800" rx=".6"/><path d="M13 3.300L15.800 2V8L13 6.700" stroke-width="1.300"/><path d="M3.300 3.300H6" stroke-width="1"/></svg>
<span class="t" id="tMainCamera" style="left:1341px;top:184px;letter-spacing:0.09px">MainCamera</span>
<svg style="left:1654px;top:186px" width="14" height="14" viewBox="0 0 14 14"><circle cx="3" cy="11" r="2.300" fill="#c4c4c4"/><circle cx="11.500" cy="2" r="1.500" fill="#d0d0d0"/><circle cx="11.500" cy="11.800" r="1.200" fill="#a0a0a0"/><path d="M3.500 9Q5 4.500 9 2.800" fill="none" stroke="#b4b4b4" stroke-width=".9"/><path d="M5.500 11.500H9.500" fill="none" stroke="#9a9a9a" stroke-width=".9" stroke-dasharray="1.500 1"/></svg>
<svg style="left:1301.8px;top:210.8px" width="14.400" height="14.400" viewBox="0 0 15 15"><rect x=".8" y=".8" width="13.400" height="13.400" fill="none" stroke="#c2c2c2" stroke-width="1.350"/><rect x="5.300" y="5.300" width="4.400" height="4.400" fill="#d2d2d2"/></svg>
<svg style="left:1322px;top:211px" width="14" height="14" viewBox="0 0 14 14" fill="none" stroke="#a9bd66" stroke-width="1.100"><rect x=".6" y=".6" width="12.800" height="12.800"/><path d="M.6 .6L13.400 13.400"/></svg>
<span class="t" id="tPlane" style="left:1341px;top:209px;letter-spacing:-0.07px">Plane</span>
<svg style="left:1301.8px;top:235.8px" width="14.400" height="14.400" viewBox="0 0 15 15"><rect x=".8" y=".8" width="13.400" height="13.400" fill="none" stroke="#c2c2c2" stroke-width="1.350"/><rect x="5.300" y="5.300" width="4.400" height="4.400" fill="#d2d2d2"/></svg>
<svg style="left:1322px;top:236px" width="14" height="14" viewBox="0 0 14 14" fill="none" stroke="#a3b763" stroke-width="1.050"><circle cx="7" cy="7" r="3.200"/><path d="M7 0V1.600M7 12.400V14M0 7H1.600M12.400 7H14M2 2L3.200 3.200M12 2L10.800 3.200M2 12L3.200 10.800M12 12L10.800 10.800"/></svg>
<span class="t" id="tDirectionalLight" style="left:1341px;top:234px;letter-spacing:0.30px">DirectionalLight</span>
<!--/SCENETREE-->
<div class="a" style="left:1328px;top:520px;width:66px;height:25px;background:#373737"></div>
<div class="a p" id="ptab" style="left:1262px;top:520px;width:66px;height:25px"></div>
<span class="t" style="left:1282px;top:522px;color:#e2e2e2">属性</span>
<span class="t dim" style="left:1348px;top:522px">导入</span>
<div class="a p" id="props" style="left:1262px;top:544px;width:416px;height:443px"></div>
<svg style="left:1673px;top:524px" width="4" height="17" viewBox="0 0 4 17" fill="#c4c4c4"><circle cx="2" cy="2" r="1.500"/><circle cx="2" cy="8.500" r="1.500"/><circle cx="2" cy="15" r="1.500"/></svg>
<svg style="left:1638px;top:563px" width="18" height="14" viewBox="0 0 18 14" fill="none" stroke="#707070" stroke-width="1.100"><path d="M2.500 0V2M2.500 5.200V14M9 0V7.500M9 10.800V14M15.500 0V2.500M15.500 5.800V14"/><circle cx="2.500" cy="3.600" r="1.600"/><circle cx="9" cy="9.100" r="1.600"/><circle cx="15.500" cy="4.100" r="1.600"/></svg>
<div class="a d" style="left:1267px;top:594px;width:406px;height:24px">
 <span class="t" style="left:6px;top:2px;color:#9a9a9a">筛选属性</span>
 <svg style="left:384px;top:4px" width="17" height="17" viewBox="0 0 17 17" fill="none" stroke="#c8c8c8" stroke-width="1.150"><circle cx="7" cy="7" r="5.800"/><path d="M11.200 11.200L15.800 15.800"/></svg>
</div>

<!-- MENUS -->
<div class="menu" style="left:171px;top:40px;width:194px;height:354px">
 <div class="mi" style="top:2px"><svg style="left:13px;top:14px" width="17" height="11" viewBox="0 0 17 11" fill="none" stroke="#b4b4b4" stroke-width="1.100"><rect x=".55" y=".55" width="12.400" height="9.900" rx=".8"/><path d="M13 3.800L15.700 2.300V8.700L13 7.200" stroke-width="1.300"/><path d="M3.300 3.600H6"/></svg><span class="t">相机</span><i class="ar"></i></div>
 <div class="mi" style="top:41px"><svg style="left:16.500px;top:11.500px" width="10" height="14" viewBox="0 0 11 15" fill="none" stroke="#b4b4b4" stroke-width="1"><path d="M3.300 10.200Q3.300 8.500 1.800 7.200Q.5 5.800 .6 4.600Q1 .6 5.500 .6Q10 .6 10.400 4.600Q10.500 5.800 9.200 7.200Q7.700 8.500 7.700 10.200Z"/><path d="M3.300 12H7.700M3.600 13.800H7.400"/><path d="M4.500 10V6.500L5.500 5.500L6.500 6.500V10" stroke-width=".7"/></svg><span class="t">光</span><i class="ar"></i></div>
 <div class="mi" style="top:80px"><svg style="left:14px;top:13px" width="15" height="13" viewBox="0 0 15 13" fill="#b4b4b4"><circle cx="7.500" cy="6.500" r="1.700"/><rect x="3.300" y=".2" width="1.600" height="1.600"/><rect x="10" y=".2" width="1.600" height="1.600"/><rect x="0" y="5.700" width="1.600" height="1.600"/><rect x="13.400" y="5.700" width="1.600" height="1.600"/><rect x="3.300" y="11.200" width="1.600" height="1.600"/><rect x="10" y="11.200" width="1.600" height="1.600"/></svg><span class="t">粒子</span><i class="ar"></i></div>
 <div class="mi" style="top:119px"><svg style="left:15px;top:12px" width="12" height="15" viewBox="0 0 12 15" fill="none" stroke="#b4b4b4" stroke-width=".9"><path d="M6 .5L10 2.600V7.200L6 9.300L2 7.200V2.600Z"/><path d="M2 2.600L6 4.700L10 2.600M6 4.700V9.300"/><g stroke-width=".8"><path d="M2.800 11.300H1.200V14.300H2.800M6.800 11.300H5.200V12.800H6.800V14.300H5.200M10.800 11.300H9.200V14.300H10.800V12.900H10"/></g></svg><span class="t">构造实体几何形状</span><i class="ar"></i></div>
 <div class="mi" style="top:158px"><svg style="left:14px;top:15px" width="15" height="9" viewBox="0 0 15 9" fill="none" stroke="#b4b4b4" stroke-width="1"><rect x=".5" y=".5" width="14" height="7.500" rx=".8"/><rect x="2.500" y="2.300" width="4" height="4" fill="#c4c4c4" stroke="none"/></svg><span class="t">触发区域</span><i class="ar"></i></div>
 <div class="mi" style="top:197px"><svg style="left:13px;top:11px" width="16" height="17" viewBox="0 0 16 17" fill="none" stroke="#b4b4b4" stroke-width="1"><circle cx="8" cy="8" r="7.200"/><path d="M2.500 15.600Q6 16.600 9.500 15.400" stroke-width=".9"/><g fill="#b4b4b4" stroke="none"><circle cx="8" cy="4.200" r="1.100"/><circle cx="8" cy="11.800" r="1.100"/><circle cx="4.200" cy="8" r="1.100"/><circle cx="11.800" cy="8" r="1.100"/></g></svg><span class="t">动画</span><i class="ar"></i></div>
 <div class="mi" style="top:236px"><svg style="left:14px;top:12px" width="15" height="15" viewBox="0 0 15 15" fill="none" stroke="#b4b4b4" stroke-width="1"><path d="M4.500 13.600A6.800 6.800 0 1 1 13.800 9.600"/><path d="M5.200 9.800A3.600 3.600 0 1 1 10.600 8.800"/><path d="M7.200 7.200L13.300 12.800" stroke-width="1.200"/><path d="M6.500 13.800Q9.500 14 11.300 12.500" stroke-width=".9"/></svg><span class="t">多媒体</span><i class="ar"></i></div>
 <div class="mi" style="top:275px"><svg style="left:13px;top:11px" width="17" height="17" viewBox="0 0 17 17" fill="none" stroke="#b4b4b4" stroke-width="1"><circle cx="8.500" cy="8.500" r="6.500"/><g fill="#4a4a4a" stroke-width=".9"><circle cx="8.500" cy="2" r="1.300"/><circle cx="8.500" cy="15" r="1.300"/><circle cx="2" cy="8.500" r="1.300"/><circle cx="15" cy="8.500" r="1.300"/></g></svg><span class="t">平面控件</span><i class="ar"></i></div>
 <div class="mi" style="top:314px"><svg style="left:14px;top:12px" width="16" height="15" viewBox="0 0 16 15" fill="none" stroke="#b4b4b4" stroke-width="1"><path d="M.5 14.300H15.500L10.800 8.300L8.400 11L5.300 6.800Z" stroke-linejoin="round"/><circle cx="4" cy="3.800" r="1.500"/><path d="M4 .3V1.300M4 6.300V7M.5 3.800H1.500M6.500 3.800H7.500M1.500 1.300L2.200 2M6.500 1.300L5.800 2M1.500 6.300L2.200 5.600" stroke-width=".8"/></svg><span class="t">环境</span><i class="ar"></i></div>
</div>
<div class="a" style="left:166px;top:358px;width:197px;height:37px;border:1px solid #ed1c24"></div>
<div class="menu" style="left:366.500px;top:352px;width:164px;height:198px">
 <div class="mi" style="top:2px"><svg style="left:14.300px;top:12.300px" width="14.800" height="13" viewBox="0 0 16 14" fill="none" stroke="#b4b4b4" stroke-width="1.100" stroke-linejoin="round"><path d="M.6 2.300Q.6 .8 2.500 .8Q4.400 .8 4.400 2.400V3.400Q8 5.400 11.400 3.400V2.400Q11.400 .8 13.200 .8Q15 .8 15 2.300V10.600Q8 15 .6 10.600Z"/><path d="M.6 2.800Q2.500 4.200 4.400 3.200M11.400 3.200Q13.200 4.200 15 2.800" stroke-width=".8"/><path d="M3.300 10.200L5.300 8L6.800 9.300L9 6.500L10.800 9.800" stroke-width=".9"/><circle cx="11.600" cy="6.200" r=".8" stroke-width=".7"/></svg><span class="t">全景天空</span></div>
 <div class="a" style="left:-3.500px;top:42px;width:169px;height:39px;background:#363636;border:1px solid #ed1c24"></div>
 <div class="mi" style="top:41px"><svg style="left:13px;top:12px" width="15" height="15" viewBox="0 0 15 15" fill="none" stroke="#c8c8c8" stroke-width="1.100"><path d="M3.800 14.300H11.500Q14.300 14.300 14.300 11.600Q14.300 9.300 11.800 9Q11.200 6.400 8.500 6.400Q6.300 6.400 5.500 8.500Q4.500 8 3.200 8.500Q.7 9.300 .7 11.600Q.7 14.300 3.800 14.300Z" stroke-linejoin="round"/><path d="M3.600 7.800Q3.400 4.500 6.700 3.500Q10 3 11.200 6" /><path d="M7.300 .3V1.800M2 2.500L3.200 3.700M12.500 2.500L11.400 3.600M13.300 7H14" stroke-width=".9"/></svg><span class="t" style="color:#ececec">动态天气</span></div>
 <div class="mi" style="top:80px"><svg style="left:13.300px;top:13px" width="16" height="12.300" viewBox="0 0 17 13" fill="none" stroke="#7a7a7a" stroke-width="1.400"><path d="M.5 1.500Q2.500 .3 4.500 1.500T8.500 1.500T12.500 1.500T16.500 1.500"/><path d="M.5 4.800Q2.500 3.600 4.500 4.800T8.500 4.800T12.500 4.800T16.500 4.800"/><path d="M.5 8.100Q2.500 6.900 4.500 8.100T8.500 8.100T12.500 8.100T16.500 8.100"/><path d="M.5 11.400Q2.500 10.200 4.500 11.400T8.500 11.400T12.500 11.400T16.500 11.400"/></svg><span class="t" style="color:#7e7e7e">海面(未安装)</span></div>
 <div class="mi" style="top:119px"><svg style="left:12.300px;top:12px" width="16" height="14" viewBox="0 0 17 14" preserveAspectRatio="none" fill="none" stroke="#787878" stroke-width="1" stroke-linejoin="round"><path d="M.5 13.500H16.300L10.200 .8L7.300 7.200L5.300 4.800Z"/><path d="M7.300 7.200Q6.800 9.500 8.500 11.800"/></svg><span class="t" style="color:#7e7e7e">地形(未安装)</span></div>
 <div class="mi" style="top:158px"><svg style="left:12.300px;top:12px" width="16" height="14" viewBox="0 0 17 14" preserveAspectRatio="none" fill="none" stroke="#787878" stroke-width="1" stroke-linejoin="round"><path d="M.5 13.500H16.300L10.200 .8L7.300 7.200L5.300 4.800Z"/><path d="M7.300 7.200Q6.800 9.500 8.500 11.800"/><path d="M1.500 .8Q4 .5 5.300 2.500M3 2.500L5.500 2.800" stroke-width=".8" stroke="#6a6a6a"/></svg><span class="t" style="color:#7e7e7e">地形装饰(未安装)</span></div>
</div>

</body>
</html>
